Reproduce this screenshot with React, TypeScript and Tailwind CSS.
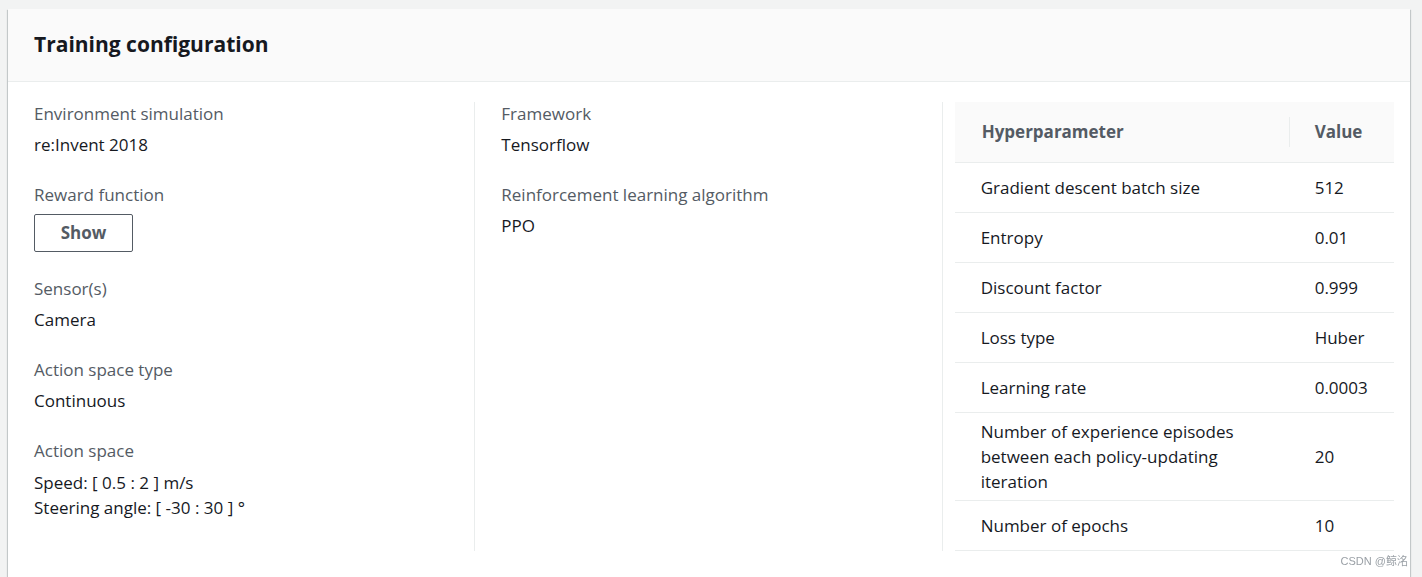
import React from 'react';

const hyperparameters: [string, string][] = [
  ['Gradient descent batch size', '512'],
  ['Entropy', '0.01'],
  ['Discount factor', '0.999'],
  ['Loss type', 'Huber'],
  ['Learning rate', '0.0003'],
  ['Number of experience episodes between each policy-updating iteration', '20'],
  ['Number of epochs', '10'],
];

function Field({ label, children }: { label: string; children: React.ReactNode }) {
  return (
    <div className="mb-[27px]">
      <div className="text-[17px] leading-[22px] text-[#545b64]">{label}</div>
      <div className="mt-[8px] text-[17px] leading-[24px] text-[#16191f]">{children}</div>
    </div>
  );
}

export default function App() {
  return (
    <div
      className="min-h-[577px] bg-[#f2f3f3] pl-[8px] pt-[9px] pr-[12px] pb-px"
      style={{ fontFamily: '"Open Sans", "Noto Sans", sans-serif' }}
    >
      <div className="bg-white shadow-[0_1px_1px_0_rgba(0,28,36,0.3),1px_1px_1px_0_rgba(0,28,36,0.15),-1px_1px_1px_0_rgba(0,28,36,0.15)]">
        <div className="h-[73px] bg-[#fafafa] border-b border-[#eaeded] px-[26px] flex items-center">
          <h2 className="text-[21px] font-bold text-[#16191f]">Training configuration</h2>
        </div>

        <div className="grid grid-cols-3 pt-[20px] pb-[26px]">
          <div className="border-r border-[#eaeded] pl-[26px] pt-px">
            <Field label="Environment simulation">re:Invent 2018</Field>
            <div className="mb-[26px]">
              <div className="text-[17px] leading-[22px] text-[#545b64]">Reward function</div>
              <button className="mt-[8px] h-[38px] w-[99px] rounded-[2px] border border-[#545b64] text-[17px] font-bold text-[#545b64]">
                Show
              </button>
            </div>
            <Field label="Sensor(s)">Camera</Field>
            <Field label="Action space type">Continuous</Field>
            <div>
              <div className="text-[17px] leading-[22px] text-[#545b64]">Action space</div>
              <div className="mt-[8px] text-[17px] leading-[25px] text-[#16191f]">
                <div>Speed: [ 0.5 : 2 ] m/s</div>
                <div>Steering angle: [ -30 : 30 ] °</div>
              </div>
            </div>
          </div>

          <div className="border-r border-[#eaeded] pl-[26px] pt-px">
            <Field label="Framework">Tensorflow</Field>
            <Field label="Reinforcement learning algorithm">PPO</Field>
          </div>

          <div className="pl-[12px] pr-[16px]">
            <table className="w-full border-collapse text-[17px] text-[#16191f]">
              <thead>
                <tr className="bg-[#fafafa] border-b border-[#eaeded]">
                  <th className="relative h-[60px] w-[335px] pl-[27px] text-left font-bold text-[#545b64]">
                    Hyperparameter
                    <span className="absolute right-0 top-[15px] h-[30px] border-r border-[#eaeded]" />
                  </th>
                  <th className="pl-[25px] text-left font-bold text-[#545b64]">Value</th>
                </tr>
              </thead>
              <tbody>
                {hyperparameters.map(([name, value]) => (
                  <tr key={name} className="border-b border-[#eaeded]">
                    <td className="h-[50px] pl-[26px] pr-[30px] py-[6px] leading-[25px]">{name}</td>
                    <td className="pl-[25px] leading-[25px]">{value}</td>
                  </tr>
                ))}
              </tbody>
            </table>
          </div>
        </div>
      </div>
      <div className="fixed right-[14px] bottom-[8px] text-[11px] text-[#9aa0a6]" style={{ fontFamily: '"Liberation Sans", "Noto Sans CJK SC", sans-serif' }}>
        CSDN @鲸洺
      </div>
    </div>
  );
}
